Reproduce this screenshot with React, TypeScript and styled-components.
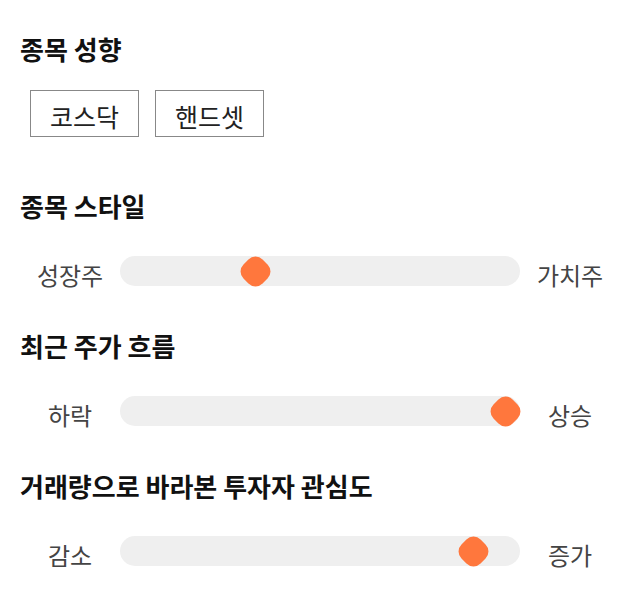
import React from "react";
import styled, { createGlobalStyle } from "styled-components";

const GlobalStyle = createGlobalStyle`
  html, body {
    margin: 0;
    padding: 0;
    background: #ffffff;
  }
  body {
    font-family: "Noto Sans CJK KR", "Noto Sans", sans-serif;
    color: #222;
  }
`;

const sliders = [
  { title: "종목 스타일", left: "성장주", right: "가치주", value: 32.7 },
  { title: "최근 주가 흐름", left: "하락", right: "상승", value: 100 },
  { title: "거래량으로 바라본 투자자 관심도", left: "감소", right: "증가", value: 91.6 },
];

const App = () => {
  return (
    <>
      <GlobalStyle />
      <Page>
        <Section>
          <Heading>종목 성향</Heading>
          <ChipRow>
            <Chip>코스닥</Chip>
            <Chip>핸드셋</Chip>
          </ChipRow>
        </Section>
        {sliders.map((s) => (
          <SliderSection key={s.title}>
            <Heading>{s.title}</Heading>
            <SliderRow>
              <EndLabel>{s.left}</EndLabel>
              <Track>
                <ThumbLane>
                  <Thumb style={{ left: `${s.value}%` }} />
                </ThumbLane>
              </Track>
              <EndLabel>{s.right}</EndLabel>
            </SliderRow>
          </SliderSection>
        ))}
      </Page>
    </>
  );
};

const Page = styled.div`
  width: 640px;
  box-sizing: border-box;
  padding: 31px 20px 0;
`;

const Section = styled.section`
  display: flex;
  flex-direction: column;
`;

const SliderSection = styled.section`
  display: flex;
  flex-direction: column;
  margin-top: 51px;
  & + & {
    margin-top: 37px;
  }
`;

const Heading = styled.h2`
  margin: 0;
  font-size: 26px;
  line-height: 36px;
  font-weight: 700;
  color: #111;
`;

const ChipRow = styled.div`
  display: flex;
  gap: 16px;
  margin: 23px 0 0 10px;
`;

const Chip = styled.button`
  width: 109px;
  height: 47px;
  box-sizing: border-box;
  padding: 6px 0 0;
  border: 1px solid #888;
  background: #fff;
  font-family: inherit;
  font-size: 25px;
  font-weight: 400;
  color: #222;
  line-height: 1;
`;

const SliderRow = styled.div`
  display: grid;
  grid-template-columns: 100px 400px 100px;
  align-items: center;
  height: 40px;
  margin-top: 27px;
`;

const EndLabel = styled.span`
  text-align: center;
  font-size: 24px;
  line-height: 30px;
  padding-top: 8px;
  color: #444;
`;

const Track = styled.div`
  position: relative;
  height: 30px;
  border-radius: 15px;
  background: #efefef;
`;

const ThumbLane = styled.div`
  position: absolute;
  top: 0;
  bottom: 0;
  left: 0;
  right: 30px;
`;

const Thumb = styled.div`
  position: absolute;
  top: 0;
  width: 30px;
  height: 30px;
  display: flex;
  align-items: center;
  justify-content: center;
  &::before {
    content: "";
    flex: none;
    width: 27px;
    height: 27px;
    border-radius: 10px;
    background: #ff773d;
    transform: rotate(45deg);
  }
`;

export default App;
